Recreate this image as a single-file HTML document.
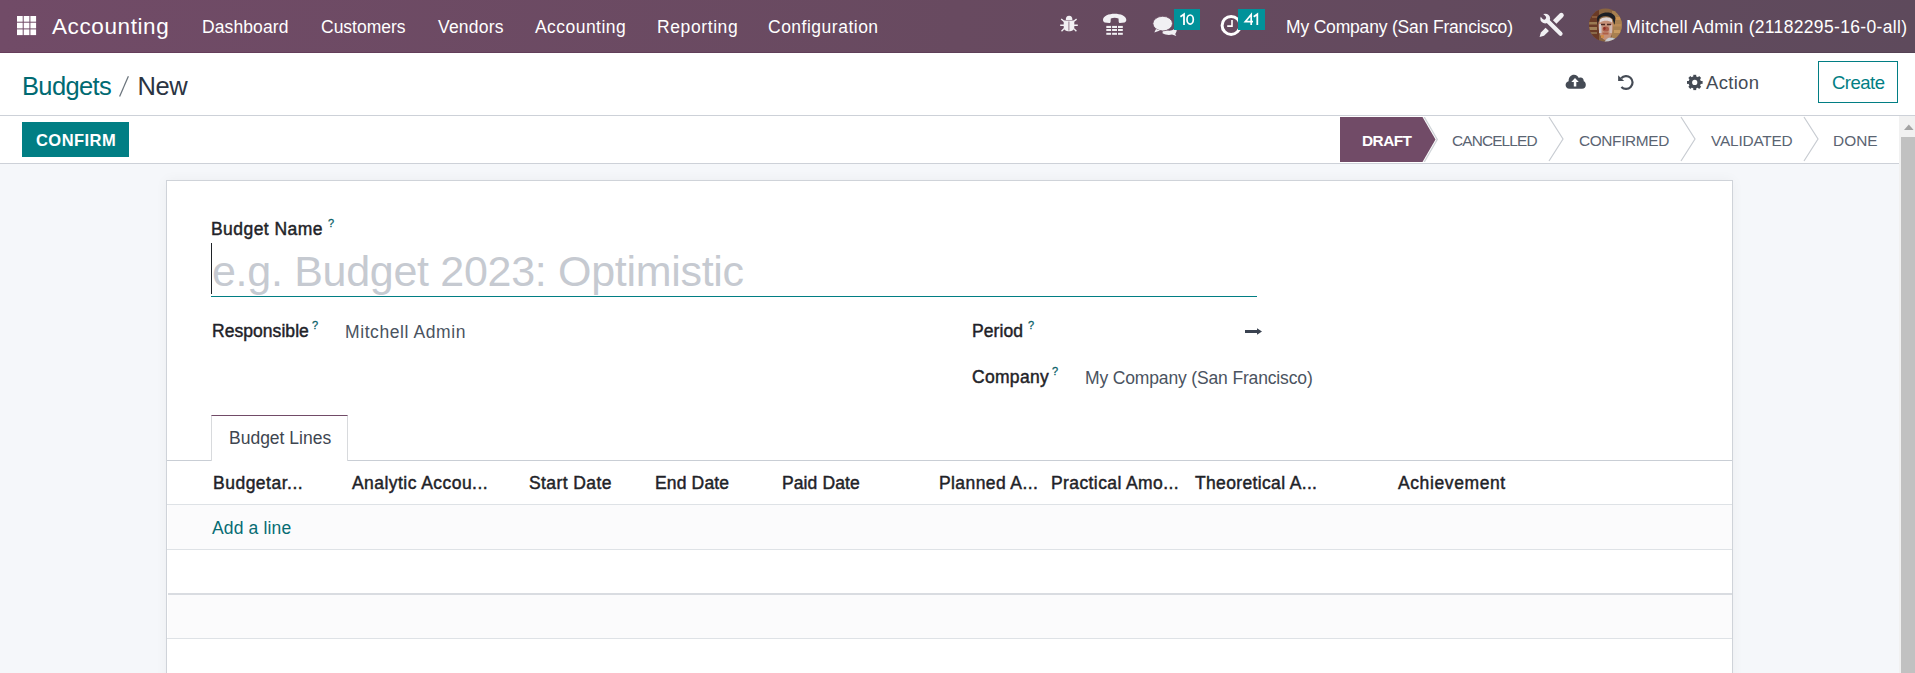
<!DOCTYPE html>
<html><head><meta charset="utf-8">
<style>
*{box-sizing:border-box;margin:0;padding:0}
html,body{width:1915px;height:673px;overflow:hidden;background:#fff;font-family:"Liberation Sans",sans-serif}
.a{position:absolute;white-space:nowrap;line-height:1}
#nav{position:absolute;left:0;top:0;width:1915px;height:53px;background:linear-gradient(90deg,#714B67 0%,#684A60 50%,#5E4A5C 100%)}
#navb{position:absolute;left:0;top:52px;width:1915px;height:1px;background:linear-gradient(90deg,#663d5b,#5e3f58 50%,#554254)}
#nav .a{color:#fff}
#cp{position:absolute;left:0;top:53px;width:1915px;height:63px;background:#fff;border-bottom:1px solid #cdd1d8}
#sb{position:absolute;left:0;top:116px;width:1899px;height:48px;background:#fff;border-bottom:1px solid #cdd1d8}
#bg{position:absolute;left:0;top:164px;width:1899px;height:509px;background:#F5F7FA}
#sheet{position:absolute;left:166px;top:180px;width:1567px;height:520px;background:#fff;border:1px solid #cfd3d9;box-shadow:0 0 12px rgba(0,0,0,0.045)}
#scroll{position:absolute;left:1899px;top:116px;width:16px;height:557px;background:#f1f1f1}
#thumb{position:absolute;left:1901px;top:137px;width:14px;height:536px;background:#c1c1c1}
.lbl{font-weight:400;color:#1f2328;font-size:17.5px;-webkit-text-stroke:0.45px #1f2328}
.q{color:#0a6269;font-size:11px;-webkit-text-stroke:0.3px #0a6269}
.hd{font-weight:400;color:#1f2328;font-size:17.5px;-webkit-text-stroke:0.45px #1f2328}
.st{font-size:15.4px;color:#5a6472}
.line{position:absolute;left:0;width:1565px;height:1px;background:#dee2e6}
.row{position:absolute;left:0;width:1565px;height:44px;background:#fbfbfc}
</style></head><body>
<div id="nav">
  <div id="navb"></div>
  <svg class="a" style="left:17px;top:16px" width="20" height="20" viewBox="0 0 20 20" fill="#fff">
    <rect x="0" y="0" width="5.7" height="5.7"/><rect x="6.7" y="0" width="5.7" height="5.7"/><rect x="13.4" y="0" width="5.7" height="5.7"/>
    <rect x="0" y="6.7" width="5.7" height="5.7"/><rect x="6.7" y="6.7" width="5.7" height="5.7"/><rect x="13.4" y="6.7" width="5.7" height="5.7"/>
    <rect x="0" y="13.4" width="5.7" height="5.7"/><rect x="6.7" y="13.4" width="5.7" height="5.7"/><rect x="13.4" y="13.4" width="5.7" height="5.7"/>
  </svg>
  <div class="a" style="left:52px;top:16px;font-size:22.5px;letter-spacing:0.6px">Accounting</div>
  <div class="a" style="left:202px;top:19px;font-size:17.5px;letter-spacing:0.1px">Dashboard</div>
  <div class="a" style="left:321px;top:19px;font-size:17.5px">Customers</div>
  <div class="a" style="left:438px;top:19px;font-size:17.5px;letter-spacing:0.2px">Vendors</div>
  <div class="a" style="left:535px;top:19px;font-size:17.5px;letter-spacing:0.45px">Accounting</div>
  <div class="a" style="left:657px;top:19px;font-size:17.5px;letter-spacing:0.6px">Reporting</div>
  <div class="a" style="left:768px;top:19px;font-size:17.5px;letter-spacing:0.5px">Configuration</div>
  <!-- bug -->
  <svg class="a" style="left:1055px;top:10px" width="30" height="30" viewBox="1055 10 30 30" fill="#f1f0f3" stroke="#f1f0f3">
    <path d="M1065.8 20 A3.3 4.2 0 0 1 1072.4 20 Z" stroke="none"/>
    <path d="M1063.7 20.6 L1074.3 20.6 L1074.3 27 C1074.3 30 1072 31.2 1069 31.2 C1066 31.2 1063.7 30 1063.7 27 Z" stroke="none"/>
    <line x1="1068.9" y1="21.5" x2="1068.9" y2="30.6" stroke="#8a7080" stroke-width="0.9"/>
    <path d="M1061.2 18.9 L1064.3 21.6 M1076.6 19.1 L1073.8 21.3 M1060.2 25.2 L1064 25.2 M1077.8 25.2 L1074 25.2 M1064.2 28.6 L1061.5 31.3 M1073.8 28.6 L1076.4 31.3" stroke-width="1.35" fill="none"/>
  </svg>
  <!-- phone -->
  <svg class="a" style="left:1098px;top:8px" width="34" height="34" viewBox="1098 8 34 34" fill="#f1f0f3">
    <path d="M1103 19.8 C1103.2 11.6 1126.1 11.6 1126.3 19.8 C1126.3 21.2 1125.6 22.2 1124.6 22.5 L1120 23.1 C1119.2 23.1 1118.8 22.5 1118.7 21.8 L1118.5 18.4 C1116 17.4 1113.3 17.4 1110.8 18.4 L1110.6 21.8 C1110.5 22.5 1110.1 23.1 1109.3 23.1 L1104.7 22.5 C1103.7 22.2 1103 21.2 1103 19.8 Z"/>
    <rect x="1106.3" y="25.9" width="4.8" height="2.1"/><rect x="1112.1" y="25.9" width="4.9" height="2.1"/><rect x="1118" y="25.9" width="4.8" height="2.1"/>
    <rect x="1106.3" y="29" width="4.8" height="2"/><rect x="1112.1" y="29" width="4.9" height="2"/><rect x="1118" y="29" width="4.8" height="2"/>
    <rect x="1106.3" y="32.8" width="4.8" height="2"/><rect x="1112.1" y="32.8" width="4.9" height="2"/><rect x="1118" y="32.8" width="4.8" height="2"/>
  </svg>
  <!-- comments -->
  <svg class="a" style="left:1148px;top:5px" width="30" height="35" viewBox="1148 5 30 35" fill="#f1f0f3">
    <path d="M1163 29 C1168 31.5 1172 31 1174 29 L1175 27 C1176.5 28.5 1177 30 1176.5 31.5 C1176 32.5 1175.6 33.4 1175.2 34 L1176.3 36 L1172 34.6 C1169 35.4 1165.5 35 1162.5 33.3 Z"/>
    <ellipse cx="1162.7" cy="23.6" rx="9.8" ry="7.3" stroke="#684a60" stroke-width="0.8"/>
    <path d="M1156 29 L1154.3 32.6 L1160 30.6 Z"/>
  </svg>
  <svg class="a" style="left:1174px;top:9px" width="26" height="21" viewBox="1174 9 26 21">
    <rect x="1174" y="9" width="26" height="21" fill="#01929A"/>
    <path d="M1184 25.1 L1184 14.3 L1180.4 16.8" fill="none" stroke="#fff" stroke-width="1.8" stroke-linejoin="miter"/>
    <ellipse cx="1190.15" cy="19.6" rx="3.15" ry="4.6" fill="none" stroke="#fff" stroke-width="1.7"/>
  </svg>
  <!-- clock -->
  <svg class="a" style="left:1219px;top:14px" width="24" height="24" viewBox="0 0 24 24" fill="none" stroke="#fff">
    <circle cx="12.1" cy="11.4" r="9" stroke-width="3"/>
    <path d="M13 6 L13 12.1 L8.2 12.1" stroke-width="1.6"/>
  </svg>
  <svg class="a" style="left:1238px;top:9px" width="27" height="21" viewBox="1238 9 27 21">
    <rect x="1238" y="9" width="27" height="21" fill="#01929A"/>
    <path d="M1251.2 25.1 L1251.2 14.5 L1245.3 21.6 L1253 21.6" fill="none" stroke="#fff" stroke-width="1.7" stroke-linejoin="miter"/>
    <path d="M1257.3 25.1 L1257.3 14.3 L1253.7 16.8" fill="none" stroke="#fff" stroke-width="1.8" stroke-linejoin="miter"/>
  </svg>
  <div class="a" style="left:1286px;top:19px;font-size:17.5px;letter-spacing:-0.18px">My Company (San Francisco)</div>
  <!-- tools -->
  <svg class="a" style="left:1534px;top:8px" width="36" height="34" viewBox="1534 8 36 34">
    <defs><mask id="wm" maskUnits="userSpaceOnUse" x="1534" y="8" width="36" height="34">
      <rect x="1534" y="8" width="36" height="34" fill="#000"/>
      <g transform="translate(1545.2 18.6) rotate(44.5)" fill="#fff">
        <circle cx="0" cy="0" r="4.9"/>
        <rect x="0" y="-2.05" width="23.6" height="4.1" rx="2.05"/>
        <rect x="-7" y="-1.9" width="5.6" height="3.8" fill="#000"/>
        <circle cx="-1.4" cy="0" r="1.9" fill="#000"/>
      </g>
    </mask></defs>
    <rect x="1534" y="8" width="36" height="34" fill="#f1f0f3" mask="url(#wm)"/>
    <g transform="translate(1551.3 25.3) rotate(-45)" fill="#f1f0f3">
      <path d="M4.8 -2.45 L14.2 -2.45 A2.45 2.45 0 0 1 14.2 2.45 L4.8 2.45 Z"/>
      <path d="M-5.7 -2.4 L-5.7 2.4 L-12.5 2.2 L-16.6 0 L-12.5 -2.2 Z"/>
    </g>
  </svg>
  <!-- avatar -->
  <svg class="a" style="left:1588px;top:8px" width="35" height="35" viewBox="0 0 35 35">
    <defs><clipPath id="cc"><circle cx="17.5" cy="17.1" r="16.5"/></clipPath></defs>
    <g clip-path="url(#cc)">
      <rect width="35" height="35" fill="#8a6440"/>
      <rect x="0" y="0" width="11" height="35" fill="#6a3a26"/>
      <rect x="1" y="14" width="8" height="2.5" fill="#9a7a52"/>
      <rect x="0" y="19" width="9" height="3" fill="#a08058"/>
      <rect x="2" y="24" width="7" height="2" fill="#8a6a48"/>
      <rect x="4" y="8" width="5" height="2" fill="#8a5a3a"/>
      <rect x="24" y="3" width="11" height="30" fill="#a88050"/>
      <rect x="26" y="9" width="6" height="3" fill="#c89050"/>
      <rect x="25" y="16" width="8" height="2.5" fill="#b88a56"/>
      <rect x="26" y="22" width="6" height="3" fill="#c89a60"/>
      <path d="M9 11 C10 3 26 2 27.5 10 L26.5 17 L24.5 11 C21 7 14 7 11 11 L10 17 Z" fill="#1c1e24"/>
      <path d="M10.5 15 C10.5 9 25 9 25 15 C25.5 24 23 32 18 32 C13 32 10 24 10.5 15 Z" fill="#c49078"/>
      <path d="M12 11.5 C15 8.5 22 8.5 24 11.5 L24 14.5 C21 12 15 12 12 14.5 Z" fill="#ddd4d4"/>
      <rect x="11" y="16" width="2.5" height="9" fill="#d0c8cc"/>
      <rect x="21.5" y="17" width="2.5" height="8" fill="#d0b8b0"/>
      <path d="M13 16.5 L17 16.5 M19 16.5 L23 16.5" stroke="#4a2a22" stroke-width="1.4"/>
      <ellipse cx="17.8" cy="21" rx="3.2" ry="2.6" fill="#a85a48"/><ellipse cx="16.5" cy="20.5" rx="1.2" ry="1.4" fill="#902c22"/>
      <rect x="14.5" y="24.5" width="6" height="2" fill="#b06048"/>
      <rect x="13" y="27" width="3" height="3" fill="#d08a48"/>
      <path d="M16 35 C18 29 24 27 30 33 L30 35 Z" fill="#c8ccd2"/>
      <path d="M24 35 L26 30 L29 35 Z" fill="#7a8ea8"/>
    </g>
  </svg>
  <div class="a" style="left:1626px;top:19px;font-size:17.5px;letter-spacing:0.33px">Mitchell Admin (21182295-16-0-all)</div>
</div>
<div id="cp">
  <div class="a" style="left:22px;top:20.5px;font-size:25.5px;letter-spacing:-0.65px;color:#006a72">Budgets</div>
  <svg class="a" style="left:110px;top:15px" width="30" height="35" viewBox="110 68 30 35"><line x1="119.6" y1="96.6" x2="128.4" y2="76.2" stroke="#6c757d" stroke-width="1.25"/></svg>
  <div class="a" style="left:137.5px;top:20.5px;font-size:25.5px;letter-spacing:-0.4px;color:#2b3442">New</div>
  <!-- cloud upload -->
  <svg class="a" style="left:1565px;top:20px" width="22" height="17" viewBox="0 0 22 17">
    <path d="M4.5 15.8 C1.8 15.8 0.6 13.8 0.6 12 C0.6 10 2 8.6 3.6 8.2 C3.6 4 6 1.8 9 1.8 C11.4 1.8 13 3.2 13.8 5 C14.4 4.7 15 4.6 15.6 4.6 C17.6 4.6 18.8 6.2 18.8 8.3 C20.3 8.8 20.8 10.3 20.8 12 C20.8 14 19.4 15.8 17 15.8 Z" fill="#454b55"/>
    <path d="M10 4.9 L6.3 9 L8.8 9 L8.8 13.6 L11.3 13.6 L11.3 9 L13.8 9 Z" fill="#fff"/>
  </svg>
  <!-- undo -->
  <svg class="a" style="left:1612px;top:17px" width="28" height="25" viewBox="1612 70 28 25" fill="none">
    <path d="M1621.2 78.3 A6.45 6.45 0 1 1 1621.4 86.9" stroke="#454b55" stroke-width="2.2"/>
    <path d="M1618.1 75.3 L1618.1 81 L1624.2 81 Z" fill="#454b55"/>
  </svg>
  <!-- gear -->
  <svg class="a" style="left:1680px;top:15px" width="30" height="30" viewBox="1680 68 30 30">
    <g fill="#454b55">
      <rect x="1693.3" y="74.8" width="2.9" height="15.3"/>
      <rect x="1687" y="81" width="15.6" height="2.9"/>
      <rect x="1693.3" y="74.8" width="2.9" height="15.3" transform="rotate(45 1694.75 82.45)"/>
      <rect x="1693.3" y="74.8" width="2.9" height="15.3" transform="rotate(-45 1694.75 82.45)"/>
      <circle cx="1694.75" cy="82.45" r="6.2"/>
    </g>
    <circle cx="1694.75" cy="82.45" r="2.6" fill="#fff"/>
  </svg>
  <div class="a" style="left:1706px;top:21px;font-size:18.5px;color:#454b55;letter-spacing:0.3px">Action</div>
  <div class="a" style="left:1818px;top:8px;width:80px;height:42px;border:1px solid #017E84"></div>
  <div class="a" style="left:1832px;top:21px;font-size:18.5px;color:#017E84;letter-spacing:-0.5px">Create</div>
</div>
<div id="sb">
  <div class="a" style="left:22px;top:6px;width:107px;height:35px;background:#017E84"></div>
  <div class="a" style="left:36px;top:16px;font-size:16.5px;font-weight:700;color:#fff;letter-spacing:0.45px">CONFIRM</div>
  <svg class="a" style="left:1330px;top:0px" width="569" height="47" viewBox="1330 116 569 47">
    <polygon points="1423.5,117 1436.5,139.5 1423.5,162 1425,162 1438,139.5 1425,117" fill="#d0d4d8"/>
    <polygon points="1340,117 1422.5,117 1435.5,139.5 1422.5,162 1340,162" fill="#714B67"/>
    <polyline points="1549,117 1563,139 1549,161" fill="none" stroke="#c8ccd2" stroke-width="1.2"/>
    <polyline points="1681,117 1695,139 1681,161" fill="none" stroke="#c8ccd2" stroke-width="1.2"/>
    <polyline points="1804,117 1818,139 1804,161" fill="none" stroke="#c8ccd2" stroke-width="1.2"/>
  </svg>
  <div class="a" style="left:1362px;top:16.5px;font-size:15.4px;font-weight:700;color:#fff;letter-spacing:-0.55px">DRAFT</div>
  <div class="a st" style="left:1452px;top:16.5px;letter-spacing:-0.85px">CANCELLED</div>
  <div class="a st" style="left:1579px;top:16.5px;letter-spacing:-0.36px">CONFIRMED</div>
  <div class="a st" style="left:1711px;top:16.5px;letter-spacing:-0.19px">VALIDATED</div>
  <div class="a st" style="left:1833px;top:16.5px;letter-spacing:0.05px">DONE</div>
</div>
<div id="bg"></div>
<div id="sheet">
  <!-- coordinates inside sheet: page x - 167, page y - 181 -->
  <div class="a lbl" style="left:44px;top:40px;letter-spacing:0.45px">Budget Name</div>
  <div class="a q" style="left:161px;top:37px">?</div>
  <div class="a" style="left:44px;top:62px;width:1px;height:51px;background:#1f2328"></div>
  <div class="a" style="left:45px;top:69px;font-size:43px;color:#c6cad1;letter-spacing:-0.3px">e.g. Budget 2023: Optimistic</div>
  <div class="a" style="left:44px;top:115px;width:1046px;height:1px;background:#017E84"></div>

  <div class="a lbl" style="left:45px;top:142px;letter-spacing:0.05px">Responsible</div>
  <div class="a q" style="left:145px;top:139px">?</div>
  <div class="a" style="left:178px;top:143px;font-size:17.5px;color:#4a5360;letter-spacing:0.58px">Mitchell Admin</div>

  <div class="a lbl" style="left:805px;top:142px;letter-spacing:0.1px">Period</div>
  <div class="a q" style="left:861px;top:139px">?</div>
  <svg class="a" style="left:1077px;top:146px" width="19" height="9" viewBox="0 0 19 9"><path d="M1 3.1 L13 3.1 L13 1.3 L18 4.55 L13 7.8 L13 6 L1 6 Z" fill="#3a4250"/></svg>

  <div class="a lbl" style="left:805px;top:188px;letter-spacing:0.3px">Company</div>
  <div class="a q" style="left:885px;top:185px">?</div>
  <div class="a" style="left:918px;top:189px;font-size:17.5px;color:#4a5360;letter-spacing:-0.15px">My Company (San Francisco)</div>

  <!-- tabs -->
  <div class="line" style="top:279px;background:#c9ced5"></div>
  <div class="a" style="left:44px;top:234px;width:137px;height:46px;background:#fff;border:1px solid #d8dadd;border-top-color:#714B67;border-bottom:none"></div>
  <div class="a" style="left:62px;top:249px;font-size:17.5px;color:#3e4650">Budget Lines</div>

  <!-- table -->
  <div class="a hd" style="left:46px;top:294px;letter-spacing:0.5px">Budgetar...</div>
  <div class="a hd" style="left:185px;top:294px;letter-spacing:0.45px">Analytic Accou...</div>
  <div class="a hd" style="left:362px;top:294px;letter-spacing:0.4px">Start Date</div>
  <div class="a hd" style="left:488px;top:294px;letter-spacing:0.15px">End Date</div>
  <div class="a hd" style="left:615px;top:294px;letter-spacing:0.1px">Paid Date</div>
  <div class="a hd" style="left:772px;top:294px;letter-spacing:0.4px">Planned A...</div>
  <div class="a hd" style="left:884px;top:294px;letter-spacing:0.4px">Practical Amo...</div>
  <div class="a hd" style="left:1028px;top:294px;letter-spacing:0.35px">Theoretical A...</div>
  <div class="a hd" style="left:1231px;top:294px;letter-spacing:0.6px">Achievement</div>
  <div class="line" style="top:323px"></div>
  <div class="row" style="top:324px;left:1px;width:1564px"></div>
  <div class="a" style="left:45px;top:339px;font-size:17.5px;color:#076c73;letter-spacing:0.15px">Add a line</div>
  <div class="line" style="top:368px"></div>
  <div class="line" style="top:412px;height:2px;left:1px;width:1564px;background:#d9dce1"></div>
  <div class="row" style="top:414px;left:1px;width:1564px"></div>
  <div class="line" style="top:457px"></div>
</div>
<div id="scroll">
  <svg class="a" style="left:4px;top:8px" width="12" height="7" viewBox="0 0 12 7"><polygon points="5.8,0.6 10.6,6 1,6" fill="#a3a3a3"/></svg>
</div>
<div id="thumb"></div>
</body></html>
